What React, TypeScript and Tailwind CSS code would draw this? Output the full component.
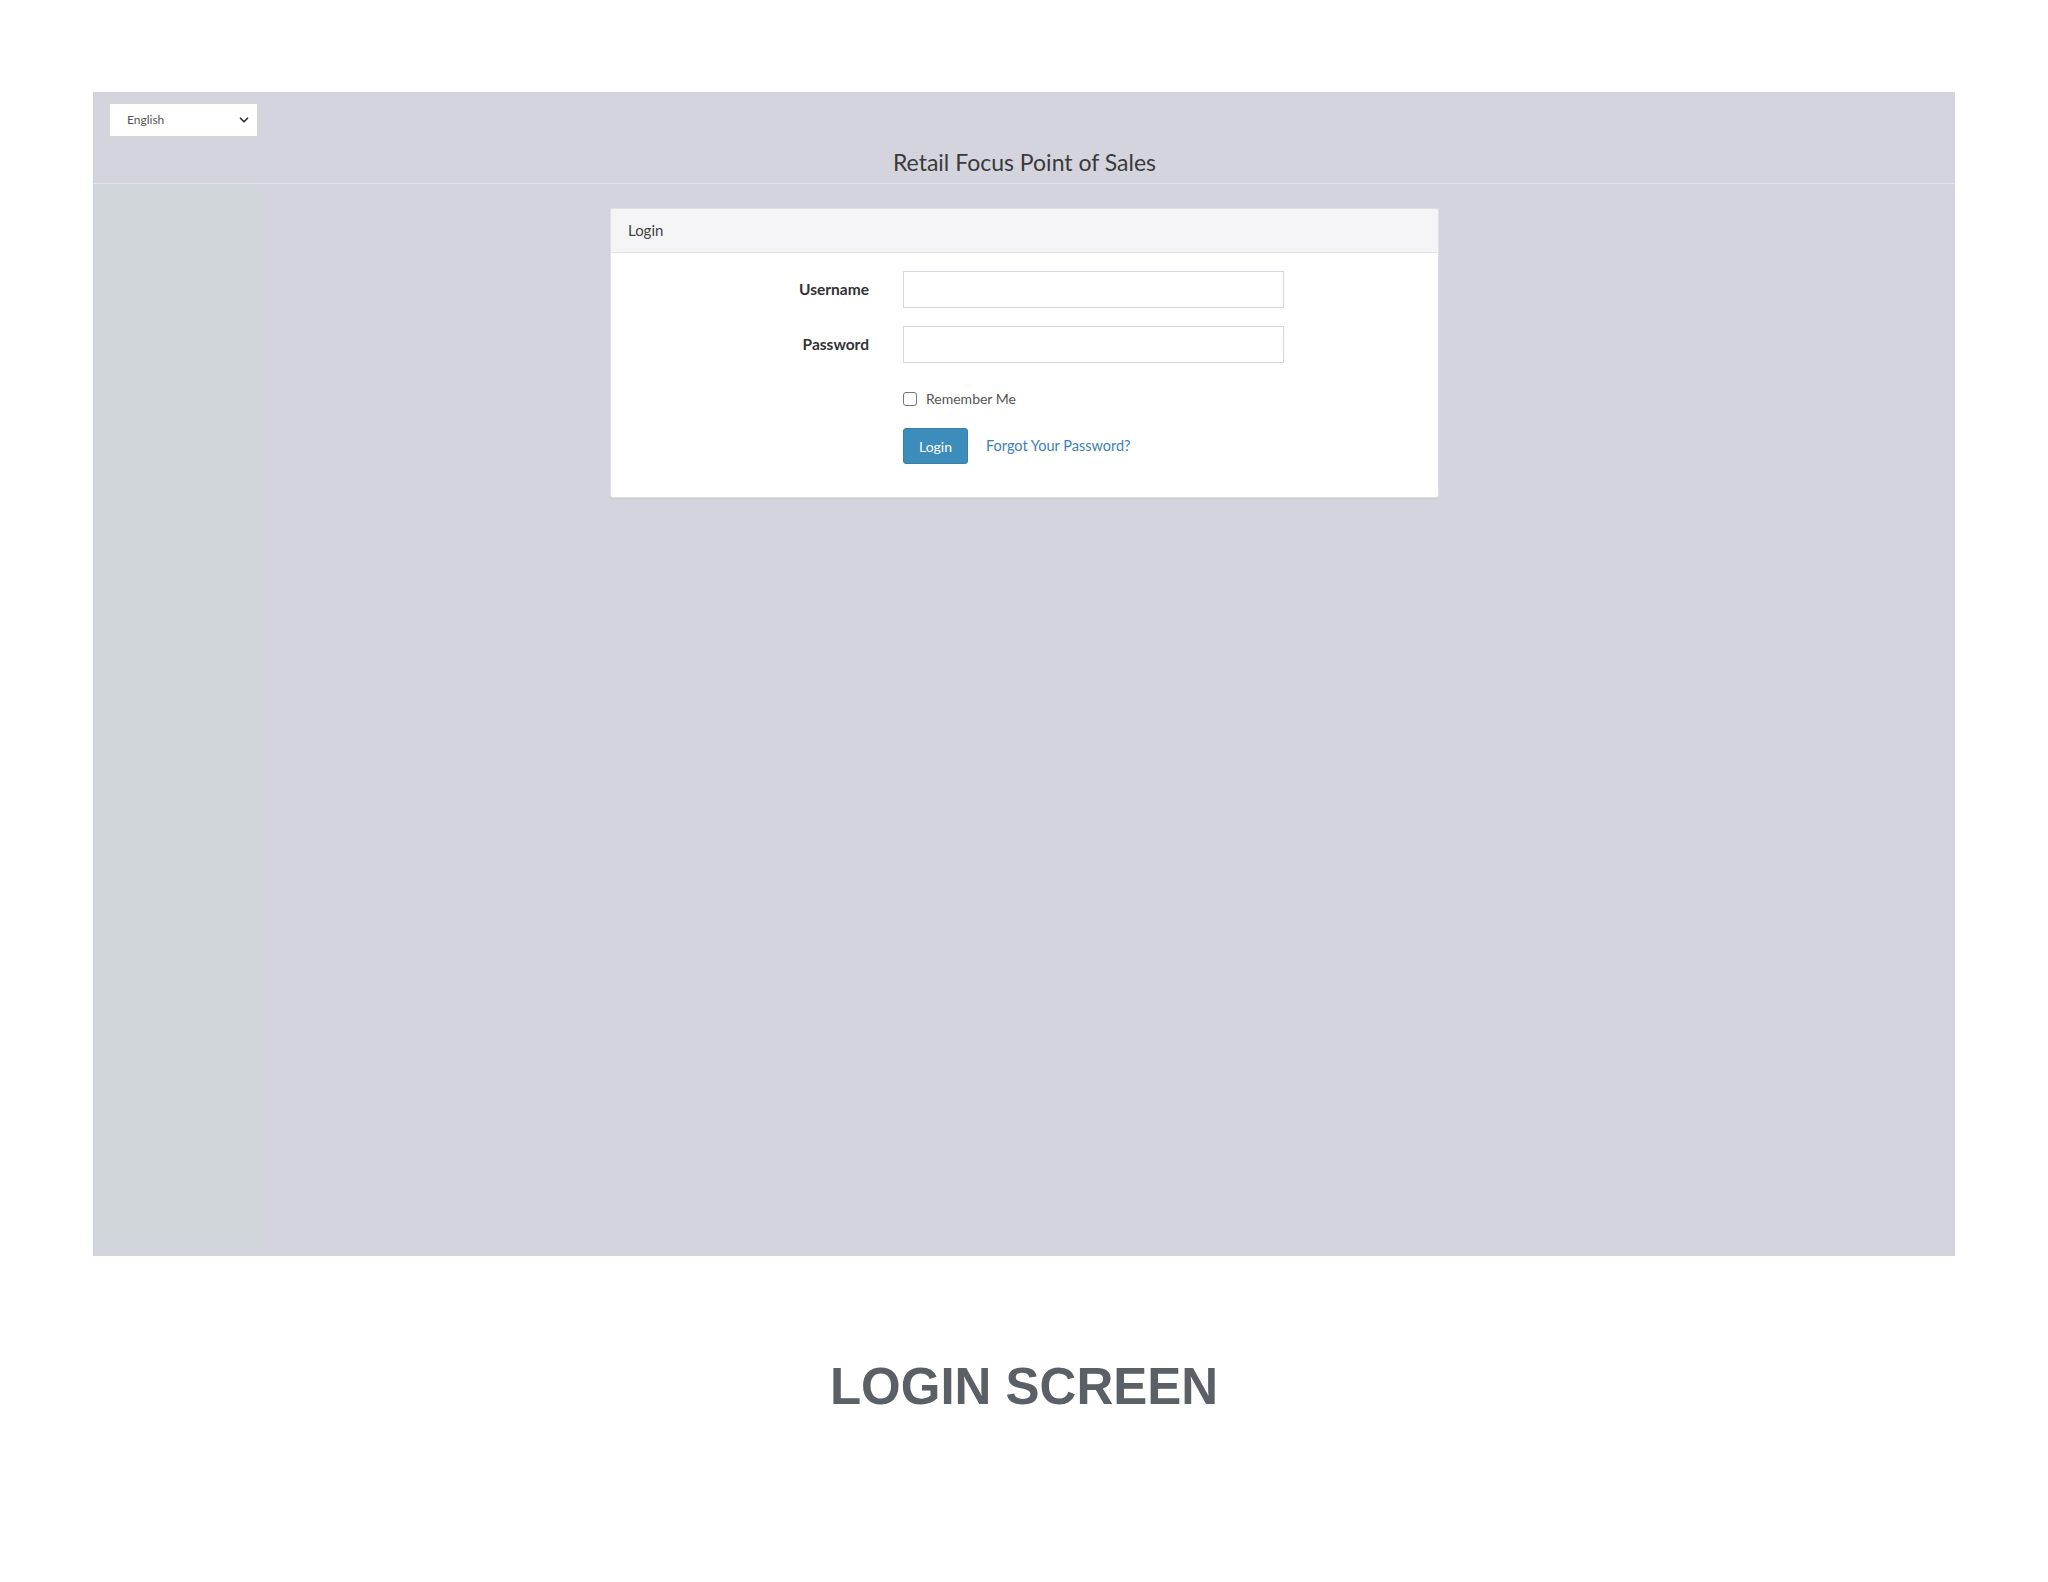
import * as React from "react";
import { ChevronDown } from "lucide-react";

const ui = { fontFamily: "Lato, 'Open Sans', sans-serif" };

function LanguageSelect() {
  return (
    <div className="flex h-[32px] w-[147px] items-center justify-between bg-white pl-[17px] pr-[6px] text-[12px] text-[#555]">
      <span>English</span>
      <ChevronDown className="h-[14px] w-[14px] text-[#333]" strokeWidth={3} />
    </div>
  );
}

function Field({ label, type }: { label: string; type: string }) {
  return (
    <>
      <label className="self-center text-right text-[15.5px] font-bold text-[#333]">{label}</label>
      <input
        type={type}
        className="h-[37px] w-[381px] border border-[#d2d6de] bg-white px-3 text-[14px] outline-none"
      />
    </>
  );
}

function LoginCard() {
  return (
    <div className="w-[829px] rounded-[3px] border border-[#e0e0e6] bg-white shadow-[0_1px_1px_rgba(0,0,0,0.05)]">
      <div className="flex h-[44px] items-center border-b border-[#e3e3e8] bg-[#f5f5f7] pl-[17px] text-[15px] text-[#444]">
        Login
      </div>
      <div className="grid grid-cols-[258px_381px] gap-x-[34px] gap-y-[18px] pb-[33px] pt-[18px]">
        <Field label="Username" type="text" />
        <Field label="Password" type="password" />
        <div />
        <label className="mt-[7px] flex items-center gap-[9px] text-[14px] text-[#555]">
          <span className="h-[14px] w-[14px] rounded-[3px] border border-[#767676] bg-white" />
          Remember Me
        </label>
        <div />
        <div className="mt-[1px] flex items-center gap-[18px]">
          <button className="h-[36px] w-[65px] rounded-[3px] border border-[#367fa9] bg-[#3c8dbc] text-[14px] text-white">
            Login
          </button>
          <a className="text-[14.5px] text-[#3c7fb8]">Forgot Your Password?</a>
        </div>
      </div>
    </div>
  );
}

export default function App() {
  return (
    <div className="h-[1582px] w-[2048px] bg-white pt-[92px]" style={ui}>
      <div className="ml-[93px] flex h-[1164px] w-[1862px] flex-col border-l border-[#cfcfd6] bg-[#d4d4de]">
        <header className="relative h-[92px] border-b border-[#e2e2ea]">
          <div className="absolute left-[16px] top-[12px]">
            <LanguageSelect />
          </div>
          <h1 className="pt-[56px] text-center text-[23px] leading-[28px] text-[#3a3a3a]">
            Retail Focus Point of Sales
          </h1>
        </header>
        <div className="flex flex-1">
          <aside className="mb-[11px] w-[167px] bg-[#d0d6d9]" />
          <main className="flex flex-1 justify-center pt-[24px] pr-[167px]">
            <div className="h-fit">
              <LoginCard />
            </div>
          </main>
        </div>
      </div>
      <p
        className="mt-[105px] text-center text-[51px] font-bold leading-none text-[#5b6067]"
        style={{ fontFamily: "'Liberation Sans', Arial, sans-serif" }}
      >
        LOGIN SCREEN
      </p>
    </div>
  );
}
